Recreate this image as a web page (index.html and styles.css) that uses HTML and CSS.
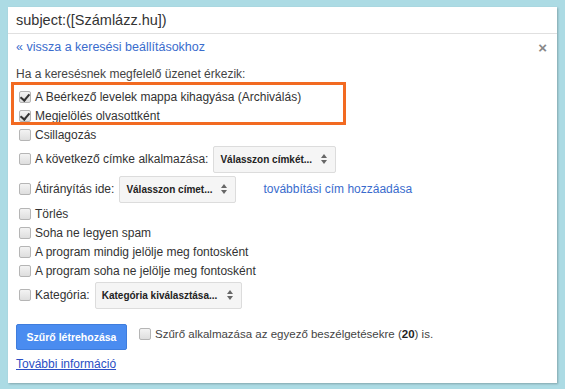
FILE: index.html
```html
<!DOCTYPE html>
<html>
<head>
<meta charset="utf-8">
<link rel="stylesheet" href="styles.css">
</head>
<body>
<div class="panel">
  <div class="search">subject:([Számlázz.hu])</div>
  <div class="content">
    <span class="close">×</span>
    <a class="back">« vissza a keresési beállításokhoz</a>
    <div class="heading">Ha a keresésnek megfelelő üzenet érkezik:</div>
    <div class="options">
      <div class="highlight"></div>
      <div class="row"><span class="cb checked"></span>A Beérkező levelek mappa kihagyása (Archiválás)</div>
      <div class="row"><span class="cb checked"></span>Megjelölés olvasottként</div>
      <div class="row"><span class="cb"></span>Csillagozás</div>
      <div class="row sel-row"><span class="cb"></span>A következő címke alkalmazása:<span class="select s1">Válasszon címkét...<span class="arr"></span></span></div>
      <div class="row sel-row"><span class="cb"></span>Átirányítás ide:<span class="select s2">Válasszon címet...<span class="arr"></span></span><a class="fwd">továbbítási cím hozzáadása</a></div>
      <div class="row"><span class="cb"></span>Törlés</div>
      <div class="row"><span class="cb"></span>Soha ne legyen spam</div>
      <div class="row"><span class="cb"></span>A program mindig jelölje meg fontosként</div>
      <div class="row"><span class="cb"></span>A program soha ne jelölje meg fontosként</div>
      <div class="row sel-row"><span class="cb"></span>Kategória:<span class="select s3">Kategória kiválasztása...<span class="arr"></span></span></div>
    </div>
    <div class="actions">
      <span class="btn">Szűrő létrehozása</span>
      <span class="apply"><span class="cb"></span>Szűrő alkalmazása az egyező beszélgetésekre (<b>20</b>) is.</span>
    </div>
    <a class="more">További információ</a>
  </div>
</div>
</body>
</html>
```
FILE: styles.css
```css
html, body {
  margin: 0;
  padding: 0;
}
body {
  background: #acdbe4;
  font-family: "Liberation Sans", Arial, sans-serif;
  font-size: 12px;
  color: #222;
  width: 565px;
  height: 389px;
  overflow: hidden;
}
.panel {
  margin: 7px 0 0 8px;
  width: 549px;
  height: 376px;
  background: #fff;
  box-shadow: 1px 1px 2px rgba(0,0,0,0.25);
}
.search {
  height: 26px;
  line-height: 27px;
  padding-left: 8px;
  font-size: 14.5px;
  color: #333;
  border-bottom: 1px solid #e0e0e0;
}
.content {
  position: relative;
  padding: 0 8px;
}
.close {
  position: absolute;
  right: 10px;
  top: 4px;
  font-size: 15px;
  color: #888;
  font-weight: bold;
  line-height: 19px;
}
.back {
  display: block;
  padding-top: 4px;
  line-height: 19px;
  font-size: 12.5px;
  color: #3a6ccd;
}
.heading {
  margin-top: 8px;
  line-height: 19px;
  color: #444;
}
.options {
  position: relative;
  margin-top: 3px;
}
.highlight {
  position: absolute;
  left: -5px;
  top: -5px;
  width: 329px;
  height: 37px;
  border: 3px solid #f26a21;
}
.row {
  display: flex;
  align-items: center;
  height: 19px;
  color: #333;
  white-space: nowrap;
}
.cb {
  display: inline-block;
  position: relative;
  box-sizing: border-box;
  width: 12px;
  height: 12px;
  margin: 0 4px 0 3px;
  border: 1px solid #b5b5b5;
  border-radius: 2px;
  background: linear-gradient(#f3f3f3, #dedede);
  flex: none;
}
.cb.checked::after {
  content: "";
  position: absolute;
  left: 2px;
  top: 0px;
  width: 4px;
  height: 7px;
  border: solid #333;
  border-width: 0 2px 2px 0;
  transform: rotate(40deg);
}
.sel-row {
  height: 30px;
}
.select {
  display: inline-flex;
  align-items: center;
  box-sizing: border-box;
  height: 27px;
  margin-left: 5px;
  padding: 0 7px 0 6px;
  border: 1px solid #dcdcdc;
  border-radius: 2px;
  background: #f5f5f5;
  font-size: 10px;
  font-weight: bold;
  color: #222;
  white-space: nowrap;
}
.s1 { width: 123px; }
.s2 { width: 117px; }
.s3 { width: 147px; }
.arr {
  position: relative;
  margin-left: auto;
  width: 8px;
  height: 10px;
  flex: none;
}
.arr::before, .arr::after {
  content: "";
  position: absolute;
  left: 1px;
  border-left: 3px solid transparent;
  border-right: 3px solid transparent;
}
.arr::before {
  top: 0;
  border-bottom: 4px solid #666;
}
.arr::after {
  bottom: 0;
  border-top: 4px solid #666;
}
.fwd {
  margin-left: 27px;
  color: #3a6ccd;
}
.actions {
  display: flex;
  align-items: center;
  margin-top: 14px;
  height: 26px;
}
.btn {
  display: inline-flex;
  align-items: center;
  justify-content: center;
  box-sizing: border-box;
  width: 111px;
  height: 26px;
  background: #4a8cf0;
  border: 1px solid #3f7ddd;
  border-radius: 2px;
  color: #fff;
  font-size: 10.5px;
  font-weight: bold;
}
.apply {
  display: flex;
  align-items: center;
  margin-left: 9px;
  margin-top: -6px;
  font-size: 11.5px;
  color: #444;
  white-space: nowrap;
}
.apply b {
  color: #222;
}
.more {
  display: block;
  margin-top: 5px;
  line-height: 18px;
  color: #2b4fc4;
  text-decoration: underline;
}
```
